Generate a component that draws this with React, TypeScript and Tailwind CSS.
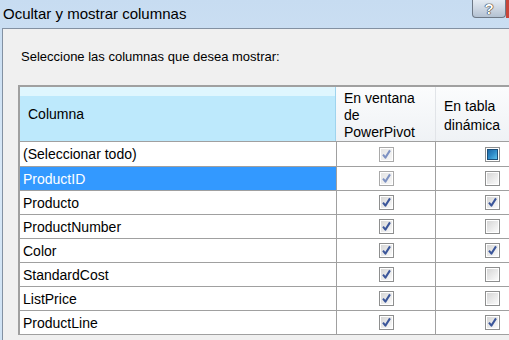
import React from "react";

type Box = "on" | "off" | "mixed" | "dim";

interface Row {
	name: string;
	win: Box;
	pivot: Box;
	selected?: boolean;
}

const rows: Row[] = [
	{ name: "(Seleccionar todo)", win: "dim", pivot: "mixed" },
	{ name: "ProductID", win: "dim", pivot: "off", selected: true },
	{ name: "Producto", win: "on", pivot: "on" },
	{ name: "ProductNumber", win: "on", pivot: "off" },
	{ name: "Color", win: "on", pivot: "on" },
	{ name: "StandardCost", win: "on", pivot: "off" },
	{ name: "ListPrice", win: "on", pivot: "off" },
	{ name: "ProductLine", win: "on", pivot: "on" },
];

function CheckBox({ state }: { state: Box }) {
	const dim = state === "dim";
	return (
		<div
			className={`w-[15px] h-[15px] border ${dim ? "border-[#a9a9a9]" : "border-[#8e8f8f]"} bg-white p-[1px]`}
		>
			<div
				className={`relative w-full h-full bg-gradient-to-br ${dim ? "from-[#e4e4e4] to-[#f7f7f7]" : "from-[#d6d6d6] to-[#fbfbfb]"} flex items-center justify-center`}
			>
				{state === "mixed" && (
					<div className="w-[11px] h-[11px] border border-[#1b4f7a] bg-gradient-to-br from-[#1e6aa8] via-[#2f8cc9] to-[#5cc0ea]" />
				)}
				{(state === "on" || state === "dim") && (
					<svg width="11" height="11" viewBox="0 0 11 11" className="absolute">
						<path
							d="M2 5.6 L4.4 8.6 L9 1.4"
							fill="none"
							stroke={dim ? "#7d91c2" : "#3b569a"}
							strokeWidth="2"
							strokeLinejoin="round"
						/>
					</svg>
				)}
			</div>
		</div>
	);
}

export default function App() {
	return (
		<div className="w-[509px] h-[340px] overflow-hidden flex flex-col bg-gradient-to-b from-[#c7dcf1] via-[#d8e8f7] to-[#cfe2f4] font-['Liberation_Sans',Arial,sans-serif] text-black">
			{/* Title bar */}
			<div className="h-[28px] shrink-0 flex items-start justify-between">
				<span className="pl-[3px] pt-[4px] text-[15px] leading-[19px] text-black">
					Ocultar y mostrar columnas
				</span>
				<div className="flex items-start">
					<div className="w-[34px] h-[18px] border border-t-0 border-[#6d7886] rounded-b-[4px] bg-gradient-to-b from-[#e4ebf3] via-[#cdd7e3] to-[#b3c1d2] flex items-center justify-center">
						<span className="text-[15px] leading-none font-bold text-white [text-shadow:0_0_1px_#222,0_0_1px_#222,0_0_1px_#222]">
							?
						</span>
					</div>
					<div className="w-[3px] h-[18px] bg-[#c8453a]" />
				</div>
			</div>

			{/* Dialog body */}
			<div className="flex-1 ml-[2px] border-l border-t border-[#8391a2] bg-[#f0f0f0] pl-[15px] pt-[20px] flex flex-col">
				<p className="text-[13px] leading-[16px] pl-[3px]">
					Seleccione las columnas que desea mostrar:
				</p>

				<div className="mt-[20px] border-l-2 border-t-2 border-[#a0a0a0] w-[520px]">
					{/* Header */}
					<div className="flex h-[55px] border-b border-[#a0a0a0] text-[14px] leading-[17px]">
						<div className="w-[316px] shrink-0 flex flex-col border-r border-[#9fd4ee]">
							<div className="h-[9px] bg-[#dff6fe]" />
							<div className="flex-1 bg-[#bde9fc] flex items-center pl-[8px] pb-[9px]">
								Columna
							</div>
						</div>
						<div className="w-[100px] shrink-0 bg-gradient-to-b from-[#fbfcfd] to-[#eff2f5] border-r border-[#e1e4e8] pl-[8px] pt-[3px]">
							En ventana
							<br />
							de
							<br />
							PowerPivot
						</div>
						<div className="flex-1 bg-gradient-to-b from-[#fbfcfd] to-[#eff2f5] pl-[8px] pt-[10px] leading-[19px]">
							En tabla
							<br />
							dinámica
						</div>
					</div>

					{/* Rows */}
					{rows.map((r, i) => (
						<div
							key={r.name}
							className={`flex ${i === 0 ? "h-[25px]" : "h-[24px]"} border-b border-[#a0a0a0] bg-white text-[14px]`}
						>
							<div
								className={`w-[316px] shrink-0 flex items-center pl-[3px] pt-[1px] ${r.selected ? "bg-[#3399ff] text-white" : ""}`}
							>
								{r.name}
							</div>
							<div className="w-[100px] shrink-0 border-l border-r border-[#a0a0a0] flex items-center justify-center">
								<CheckBox state={r.win} />
							</div>
							<div className="w-[112px] shrink-0 flex items-center justify-center">
								<CheckBox state={r.pivot} />
							</div>
						</div>
					))}
				</div>
			</div>
		</div>
	);
}
